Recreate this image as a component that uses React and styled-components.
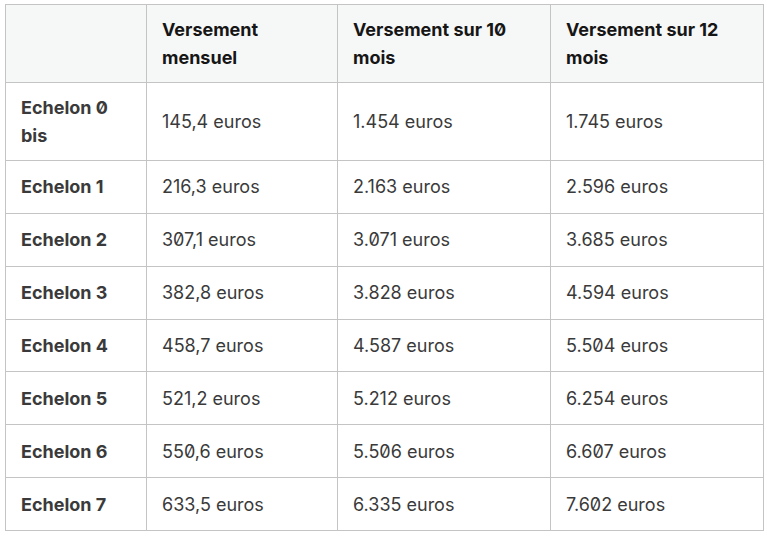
import styled, { createGlobalStyle } from "styled-components";

const GlobalStyle = createGlobalStyle`
    body{
        margin: 0;
        background: #ffffff;
        font-family: Inter, "Noto Sans", sans-serif;
    }
`

const Page = styled.div`
    padding: 4px 0 0 5px;
`

const Table = styled.table`
    border-collapse: collapse;
    table-layout: fixed;
    width: 759px;
    font-size: 18px;
    line-height: 28px;
    font-feature-settings: "zero" 1;
    border: 1px solid #c4c4c4;
`

const Head = styled.thead`
    background: #f6f8f8;
`

const Th = styled.th`
    text-align: left;
    vertical-align: middle;
    font-weight: 700;
    color: #161616;
    padding: 11px 15px 10px;
    border: 1px solid #c4c4c4;
`

const Row = styled.tr`
    height: 52.86px;
`

const Cell = styled.td`
    vertical-align: middle;
    padding: 11px 15px 10px;
    border: 1px solid #c4c4c4;
    color: #3a3a3a;
    font-weight: ${p => p.$label ? 700 : 400};
`

const rows=[
    ['Echelon 0 bis','145,4 euros','1.454 euros','1.745 euros'],
    ['Echelon 1','216,3 euros','2.163 euros','2.596 euros'],
    ['Echelon 2','307,1 euros','3.071 euros','3.685 euros'],
    ['Echelon 3','382,8 euros','3.828 euros','4.594 euros'],
    ['Echelon 4','458,7 euros','4.587 euros','5.504 euros'],
    ['Echelon 5','521,2 euros','5.212 euros','6.254 euros'],
    ['Echelon 6','550,6 euros','5.506 euros','6.607 euros'],
    ['Echelon 7','633,5 euros','6.335 euros','7.602 euros'],
];

function App(){
    return(
        <Page>
            <GlobalStyle/>
            <Table>
                <colgroup>
                    <col style={{width:'141px'}}/>
                    <col style={{width:'191px'}}/>
                    <col style={{width:'213px'}}/>
                    <col style={{width:'213px'}}/>
                </colgroup>
                <Head>
                    <tr>
                        <Th></Th>
                        <Th>Versement mensuel</Th>
                        <Th>Versement sur 10 mois</Th>
                        <Th>Versement sur 12 mois</Th>
                    </tr>
                </Head>
                <tbody>
                    {rows.map((r,i)=>(
                        <Row key={i}>
                            {r.map((c,j)=>(
                                <Cell key={j} $label={j===0}>{c}</Cell>
                            ))}
                        </Row>
                    ))}
                </tbody>
            </Table>
        </Page>
    );
}
export default App;
